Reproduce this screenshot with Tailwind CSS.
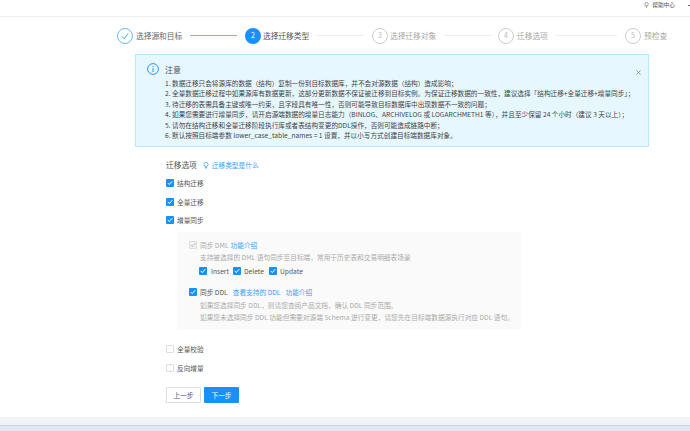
<!DOCTYPE html>
<html lang="zh-CN">
<head>
    <meta charset="UTF-8">
    <title>选择迁移类型</title>
    <script src="https://cdn.jsdelivr.net/npm/@tailwindcss/browser@4"></script>
</head>
<body class="w-[690px] h-[431px] overflow-hidden bg-white font-['Noto_Sans_CJK_SC','Noto_Sans',sans-serif] text-[#555]">
    <!-- top bar -->
    <div class="h-[17px] border-b border-[#eee] flex items-start pt-[2px] justify-end text-[5.7px] leading-[6px] text-[#555]">
        <svg class="w-[5px] h-[6px] mr-[2px]" viewBox="0 0 12 14" fill="none" stroke="#666" stroke-width="1.4"><circle cx="6" cy="5" r="4.2"/><path d="M4 11h4M5 13h2"/></svg>
        <span class="whitespace-nowrap ml-[1px]">帮助中心</span>
        <span class="ml-[13px] mt-[3px] w-[2px] h-[1px] bg-[#666]"></span>
    </div>

    <!-- steps -->
    <div class="h-[37px] pl-[117px] flex items-center text-[7.7px] leading-none whitespace-nowrap">
        <div class="w-[16px] h-[16px] rounded-full border border-[#69b8ff] flex items-center justify-center">
            <svg class="w-[8px] h-[8px]" viewBox="0 0 10 10" fill="none" stroke="#1890ff" stroke-width="1"><path d="M1 5.5l3 3 5-7"/></svg>
        </div>
        <span class="ml-[3px] w-[46px] text-[#666]">选择源和目标</span>
        <span class="ml-[8px] w-[47px] h-[1px] bg-[#69b8ff]"></span>
        <div class="ml-[8px] w-[16px] h-[16px] rounded-full bg-[#1890ff] text-white text-[7px] flex items-center justify-center">2</div>
        <span class="ml-[2px] w-[46px] text-[#555]">选择迁移类型</span>
        <span class="ml-[8px] w-[47px] h-[1px] bg-[#eee]"></span>
        <div class="ml-[8px] w-[16px] h-[16px] rounded-full border border-[#ccc] text-[#bbb] text-[7px] flex items-center justify-center">3</div>
        <span class="ml-[2px] w-[46px] text-[#aaa]">选择迁移对象</span>
        <span class="ml-[8px] w-[47px] h-[1px] bg-[#eee]"></span>
        <div class="ml-[7px] w-[16px] h-[16px] rounded-full border border-[#ccc] text-[#bbb] text-[7px] flex items-center justify-center">4</div>
        <span class="ml-[3px] w-[30px] text-[#aaa]">迁移选项</span>
        <span class="ml-[8px] w-[62px] h-[1px] bg-[#eee]"></span>
        <div class="ml-[8px] w-[16px] h-[16px] rounded-full border border-[#ccc] text-[#bbb] text-[7px] flex items-center justify-center">5</div>
        <span class="ml-[3px] text-[#aaa]">预检查</span>
    </div>

    <!-- notice -->
    <div class="ml-[135px] w-[514px] h-[93px] bg-[#e6f7ff] border border-[#bae7ff] flex pl-[11px] pt-[8px] relative">
        <svg class="w-[12px] h-[12px] shrink-0" viewBox="0 0 14 14" fill="none" stroke="#1890ff" stroke-width="1.1"><circle cx="7" cy="7" r="6.3"/><path d="M7 6v4.5M7 3.4v1.4"/></svg>
        <div class="ml-[6px]">
            <div class="text-[8px] leading-[12px] mt-[1px] mb-[2px] text-[#555]">注意</div>
            <ol class="text-[6.65px] leading-[10.4px] text-[#444] whitespace-nowrap">
                <li>1. 数据迁移只会将源库的数据（结构）复制一份到目标数据库，并不会对源数据（结构）造成影响；</li>
                <li>2. 全量数据迁移过程中如果源库有数据更新，这部分更新数据不保证被迁移到目标实例。为保证迁移数据的一致性，建议选择「结构迁移+全量迁移+增量同步」；</li>
                <li>3. 待迁移的表需具备主键或唯一约束，且字段具有唯一性，否则可能导致目标数据库中出现数据不一致的问题；</li>
                <li>4. 如果您需要进行增量同步，请开启源端数据的增量日志能力（BINLOG、ARCHIVELOG 或 LOGARCHMETH1 等），并且至少保留 24 个小时（建议 3 天以上）；</li>
                <li>5. 请勿在结构迁移和全量迁移阶段执行库或者表结构变更的DDL操作，否则可能造成链路中断；</li>
                <li>6. 默认按照目标端参数 lower_case_table_names = 1 设置，并以小写方式创建目标端数据库对象。</li>
            </ol>
        </div>
        <svg class="absolute right-[7px] top-[15px] w-[5px] h-[5px]" viewBox="0 0 6 6" stroke="#777" stroke-width="0.8"><path d="M.5.5l5 5M5.5.5l-5 5"/></svg>
    </div>

    <!-- options -->
    <div class="ml-[166px] mt-[12px] text-[6.7px] leading-[12px] text-[#555] whitespace-nowrap">
        <div class="flex items-center h-[12px]">
            <span class="text-[7.7px]">迁移选项</span>
            <svg class="ml-[6px] w-[6px] h-[7px]" viewBox="0 0 12 14" fill="none" stroke="#1890ff" stroke-width="1.3"><circle cx="6" cy="5" r="4.2"/><path d="M4 11h4M5 13h2"/></svg>
            <span class="ml-[3px] text-[#3a9fff]">迁移类型是什么</span>
        </div>
        <label class="flex items-center mt-[6px] h-[12px]">
            <span class="w-[8px] h-[8px] rounded-[1px] bg-[#1890ff] flex items-center justify-center"><svg class="w-[6px] h-[6px]" viewBox="0 0 6 6" fill="none" stroke="#fff" stroke-width="1"><path d="M.8 3l1.5 1.6L5.2 1.2"/></svg></span>
            <span class="ml-[3px]">结构迁移</span>
        </label>
        <label class="flex items-center mt-[7px] h-[12px]">
            <span class="w-[8px] h-[8px] rounded-[1px] bg-[#1890ff] flex items-center justify-center"><svg class="w-[6px] h-[6px]" viewBox="0 0 6 6" fill="none" stroke="#fff" stroke-width="1"><path d="M.8 3l1.5 1.6L5.2 1.2"/></svg></span>
            <span class="ml-[3px]">全量迁移</span>
        </label>
        <label class="flex items-center mt-[6px] h-[12px]">
            <span class="w-[8px] h-[8px] rounded-[1px] bg-[#1890ff] flex items-center justify-center"><svg class="w-[6px] h-[6px]" viewBox="0 0 6 6" fill="none" stroke="#fff" stroke-width="1"><path d="M.8 3l1.5 1.6L5.2 1.2"/></svg></span>
            <span class="ml-[3px]">增量同步</span>
        </label>

        <div class="ml-[11px] mt-[6px] w-[344px] h-[97px] bg-[#fafafa] pl-[12px] pt-[7px]">
            <div class="flex items-center h-[12px] text-[#aaa]">
                <span class="w-[8px] h-[8px] rounded-[1px] border border-[#ddd] bg-[#f3f3f3] flex items-center justify-center"><svg class="w-[6px] h-[6px]" viewBox="0 0 6 6" fill="none" stroke="#bbb" stroke-width="1"><path d="M.8 3l1.5 1.6L5.2 1.2"/></svg></span>
                <span class="ml-[3px]">同步 DML</span>
                <span class="ml-[2px] text-[#3a9fff]">功能介绍</span>
            </div>
            <div class="ml-[11px] h-[12px] text-[#aaa]">支持被选择的 DML 语句同步至目标端，常用于历史表和交易明细表场景</div>
            <div class="mt-[2px] ml-[10px] flex items-center h-[12px]">
                <span class="w-[8px] h-[8px] rounded-[1px] bg-[#1890ff] flex items-center justify-center"><svg class="w-[6px] h-[6px]" viewBox="0 0 6 6" fill="none" stroke="#fff" stroke-width="1"><path d="M.8 3l1.5 1.6L5.2 1.2"/></svg></span>
                <span class="ml-[4px] w-[18px]">Insert</span>
                <span class="ml-[4px] w-[8px] h-[8px] rounded-[1px] bg-[#1890ff] flex items-center justify-center"><svg class="w-[6px] h-[6px]" viewBox="0 0 6 6" fill="none" stroke="#fff" stroke-width="1"><path d="M.8 3l1.5 1.6L5.2 1.2"/></svg></span>
                <span class="ml-[3px] w-[21px]">Delete</span>
                <span class="ml-[4px] w-[8px] h-[8px] rounded-[1px] bg-[#1890ff] flex items-center justify-center"><svg class="w-[6px] h-[6px]" viewBox="0 0 6 6" fill="none" stroke="#fff" stroke-width="1"><path d="M.8 3l1.5 1.6L5.2 1.2"/></svg></span>
                <span class="ml-[3px]">Update</span>
            </div>
            <div class="mt-[9px] flex items-center h-[12px]">
                <span class="w-[8px] h-[8px] rounded-[1px] bg-[#1890ff] flex items-center justify-center"><svg class="w-[6px] h-[6px]" viewBox="0 0 6 6" fill="none" stroke="#fff" stroke-width="1"><path d="M.8 3l1.5 1.6L5.2 1.2"/></svg></span>
                <span class="ml-[3px]">同步 DDL</span>
                <span class="ml-[5px] text-[#3a9fff]">查看支持的 DDL</span>
                <span class="ml-[5px] text-[#3a9fff]">功能介绍</span>
            </div>
            <div class="mt-[1px] ml-[11px] leading-[12px] text-[#aaa]">
                <div>如果您选择同步 DDL，则请您查阅产品文档，确认 DDL 同步范围。</div>
                <div>如果您未选择同步 DDL 功能但需要对源端 Schema 进行变更，请您先在目标端数据源执行对应 DDL 语句。</div>
            </div>
        </div>

        <label class="flex items-center mt-[14px] h-[12px]">
            <span class="w-[8px] h-[8px] rounded-[1px] border border-[#ddd] bg-white"></span>
            <span class="ml-[3px]">全量校验</span>
        </label>
        <label class="flex items-center mt-[7px] h-[12px]">
            <span class="w-[8px] h-[8px] rounded-[1px] border border-[#ddd] bg-white"></span>
            <span class="ml-[3px]">反向增量</span>
        </label>
        <div class="flex mt-[13px] gap-[3px]">
            <button class="w-[35px] h-[16px] border border-[#ddd] rounded-[1px] text-[#555] bg-white">上一步</button>
            <button class="w-[35px] h-[16px] rounded-[1px] text-white bg-[#1890ff]">下一步</button>
        </div>
    </div>

    <!-- page bottom -->
    <div class="mt-[14px] h-[8px] bg-[#f0f2f5]"></div>
    <div class="h-[10px] bg-[#dfe8f2] border-t border-[#ccd6e0]"></div>
</body>
</html>
